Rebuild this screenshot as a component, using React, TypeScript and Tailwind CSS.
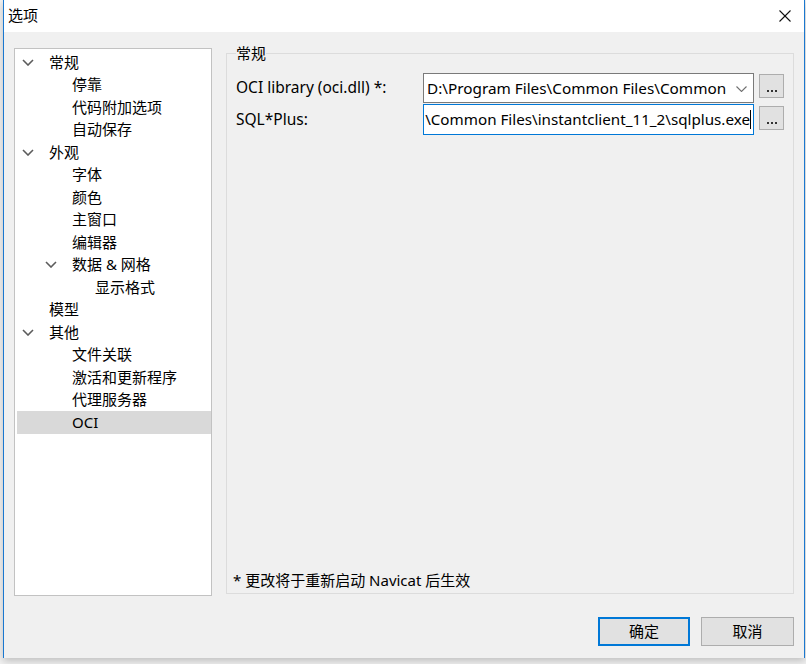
import React from "react";

type Node = { t: string; l: number; chev?: boolean; sel?: boolean };

const tree: Node[] = [
  { t: "常规", l: 0, chev: true },
  { t: "停靠", l: 1 },
  { t: "代码附加选项", l: 1 },
  { t: "自动保存", l: 1 },
  { t: "外观", l: 0, chev: true },
  { t: "字体", l: 1 },
  { t: "颜色", l: 1 },
  { t: "主窗口", l: 1 },
  { t: "编辑器", l: 1 },
  { t: "数据 & 网格", l: 1, chev: true },
  { t: "显示格式", l: 2 },
  { t: "模型", l: 0 },
  { t: "其他", l: 0, chev: true },
  { t: "文件关联", l: 1 },
  { t: "激活和更新程序", l: 1 },
  { t: "代理服务器", l: 1 },
  { t: "OCI", l: 1, sel: true },
];

const indent = ["pl-0", "pl-[23px]", "pl-[46px]"];

function Chevron() {
  return (
    <svg width="12" height="7" viewBox="0 0 12 7" className="block">
      <polyline points="1,1 6,6 11,1" fill="none" stroke="#5c5c5c" strokeWidth="1.6" />
    </svg>
  );
}

function DotsButton({ className }: { className: string }) {
  return (
    <div
      className={`w-[25px] h-[24px] flex-none bg-[#e1e1e1] border border-[#adadad] flex items-end justify-center pb-[5px] ${className}`}
    >
      <div className="flex gap-[2px]">
        <span className="w-[2px] h-[2px] bg-[#333]"></span>
        <span className="w-[2px] h-[2px] bg-[#333]"></span>
        <span className="w-[2px] h-[2px] bg-[#333]"></span>
      </div>
    </div>
  );
}

export default function App() {
  return (
    <div className="w-[806px] h-[664px] bg-[#f2f2f2] font-['Noto_Sans','Noto_Sans_CJK_SC',sans-serif] text-[15px] text-black overflow-hidden">
      <div className="ml-[3px] w-[802px] h-[658px] flex flex-col border-x border-[#1a78d0] shadow-[0_3px_8px_rgba(0,0,0,0.22)]">
        {/* title bar */}
        <div className="h-[32px] flex-none bg-white flex items-center pl-[4px] pr-[13px]">
          <span className="leading-[20px] -mt-[2px]">选项</span>
          <div className="ml-auto -mt-[1px]">
            <svg width="12" height="12" viewBox="0 0 12 12" className="block">
              <line x1="0.5" y1="0.5" x2="11.5" y2="11.5" stroke="#111" strokeWidth="1.1" />
              <line x1="11.5" y1="0.5" x2="0.5" y2="11.5" stroke="#111" strokeWidth="1.1" />
            </svg>
          </div>
        </div>

        {/* body */}
        <div className="flex-1 bg-[#f0f0f0] flex flex-col px-[10px] pt-[11px] pb-[11px]">
          <div className="h-[553px] flex items-start">
            {/* tree */}
            <div className="mt-[5px] w-[198px] h-[548px] flex-none bg-white border border-[#c2c2c2] pt-[2px]">
              {tree.map((n, i) => (
                <div
                  key={i}
                  className={`ml-[2px] h-[22.5px] flex items-center ${indent[n.l]} ${n.sel ? "bg-[#d9d9d9]" : ""}`}
                >
                  <div className="w-[32px] flex-none pl-[5px]">{n.chev ? <Chevron /> : null}</div>
                  <span className="leading-[20px] -mt-[1px] whitespace-nowrap">{n.t}</span>
                </div>
              ))}
            </div>

            {/* group box */}
            <fieldset className="ml-[14px] flex-1 h-[551px] border border-[#dcdcdc] pl-[9px] pr-[9px] flex flex-col min-w-0">
              <legend className="px-0 leading-[20px] -mt-[1px]">常规</legend>
              <div className="mt-[10px] flex items-start">
                <div className="w-[187px] flex-none h-[30px] flex items-center whitespace-nowrap text-[15.5px]">
                  OCI library (oci.dll) *:
                </div>
                <div className="w-[331px] h-[30px] flex-none bg-white border border-[#7a7a7a] flex items-center pl-[3px] pr-[6px] overflow-hidden text-[15.3px]">
                  <span className="whitespace-nowrap flex-1 overflow-hidden">D:\Program Files\Common Files\Common</span>
                  <svg width="11" height="6" viewBox="0 0 11 6" className="flex-none ml-[4px] mt-[1px]">
                    <polyline points="0.5,0.5 5.5,5.5 10.5,0.5" fill="none" stroke="#707070" strokeWidth="1.1" />
                  </svg>
                </div>
                <DotsButton className="ml-[5px] mt-[1px]" />
              </div>
              <div className="mt-[1px] flex items-start">
                <div className="w-[187px] flex-none h-[31px] flex items-center whitespace-nowrap text-[15.5px]">SQL*Plus:</div>
                <div className="w-[331px] h-[31px] flex-none bg-white border border-[#0078d7] flex items-center justify-end pr-[2px] overflow-hidden text-[15.2px]">
                  <span className="whitespace-nowrap">\Common Files\instantclient_11_2\sqlplus.exe</span>
                  <span className="w-px h-[19px] bg-black flex-none"></span>
                </div>
                <DotsButton className="ml-[5px] mt-[2px]" />
              </div>
              <div className="mt-auto mb-[3px] -ml-[3px] leading-[20px] whitespace-nowrap">
                * 更改将于重新启动 Navicat 后生效
              </div>
            </fieldset>
          </div>

          {/* buttons */}
          <div className="mt-[21px] flex justify-end gap-[11px]">
            <div className="w-[92px] h-[29px] bg-[#e1e1e1] border-2 border-[#0078d7] flex items-center justify-center leading-none">
              确定
            </div>
            <div className="w-[93px] h-[29px] bg-[#e1e1e1] border border-[#adadad] flex items-center justify-center leading-none">
              取消
            </div>
          </div>
        </div>
      </div>
    </div>
  );
}
